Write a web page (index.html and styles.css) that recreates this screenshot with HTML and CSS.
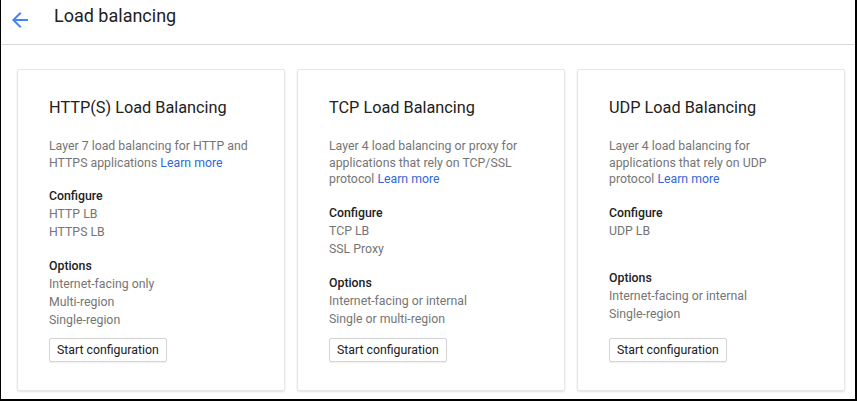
FILE: index.html
```html
<!DOCTYPE html>
<html lang="en">
<head>
<meta charset="utf-8">
<title>Load balancing</title>
<link rel="stylesheet" href="styles.css">
</head>
<body>
<div class="frame">
  <header class="header">
    <svg class="back" viewBox="0 0 24 24" width="24" height="24" aria-hidden="true">
      <path d="M20 11H7.83l5.59-5.59L12 4l-8 8 8 8 1.41-1.41L7.83 13H20v-2z"/>
    </svg>
    <h1 class="page-title">Load balancing</h1>
  </header>
  <main class="cards">
    <section class="card">
      <h2 class="card-title">HTTP(S) Load Balancing</h2>
      <p class="desc">Layer 7 load balancing for HTTP and HTTPS applications <a class="link" href="#">Learn more</a></p>
      <div class="group group-config">
        <div class="group-title">Configure</div>
        <div class="item">HTTP LB</div>
        <div class="item">HTTPS LB</div>
      </div>
      <div class="group group-options">
        <div class="group-title">Options</div>
        <div class="item">Internet-facing only</div>
        <div class="item">Multi-region</div>
        <div class="item">Single-region</div>
      </div>
      <button class="btn" type="button">Start configuration</button>
    </section>
    <section class="card">
      <h2 class="card-title">TCP Load Balancing</h2>
      <p class="desc">Layer 4 load balancing or proxy for applications that rely on TCP/SSL protocol <a class="link" href="#">Learn more</a></p>
      <div class="group group-config">
        <div class="group-title">Configure</div>
        <div class="item">TCP LB</div>
        <div class="item">SSL Proxy</div>
      </div>
      <div class="group group-options">
        <div class="group-title">Options</div>
        <div class="item">Internet-facing or internal</div>
        <div class="item">Single or multi-region</div>
      </div>
      <button class="btn" type="button">Start configuration</button>
    </section>
    <section class="card">
      <h2 class="card-title">UDP Load Balancing</h2>
      <p class="desc">Layer 4 load balancing for applications that rely on UDP protocol <a class="link" href="#">Learn more</a></p>
      <div class="group group-config">
        <div class="group-title">Configure</div>
        <div class="item">UDP LB</div>
      </div>
      <div class="group group-options">
        <div class="group-title">Options</div>
        <div class="item">Internet-facing or internal</div>
        <div class="item">Single-region</div>
      </div>
      <button class="btn" type="button">Start configuration</button>
    </section>
  </main>
</div>
</body>
</html>
```

FILE: styles.css
```css
* { box-sizing: border-box; }
html, body { margin: 0; padding: 0; background: #fff; }
body {
  font-family: Roboto, "Liberation Sans", Arial, sans-serif;
  color: #212121;
}
.frame {
  width: 857px;
  height: 401px;
  border-left: 1px solid #000;
  border-right: 2px solid #000;
  border-bottom: 2px solid #000;
  overflow: hidden;
}
.header {
  display: flex;
  align-items: flex-start;
  height: 45px;
  padding: 4px 0 0 7px;
  border-bottom: 1px solid #dadada;
}
.back {
  fill: #4285f4;
  margin-top: 4px;
  flex: none;
}
.page-title {
  margin: 0 0 0 22px;
  font-size: 18px;
  line-height: 24px;
  font-weight: 400;
  color: #212121;
}
.cards {
  display: grid;
  grid-template-columns: repeat(3, 268px);
  column-gap: 12px;
  padding: 24px 10px 0 16px;
}
.card {
  display: flex;
  flex-direction: column;
  border: 1px solid #e6e6e6;
  border-radius: 2px;
  box-shadow: 0 1px 2px rgba(0, 0, 0, 0.12);
  padding: 26px 32px 28px 31px;
}
.card-title {
  margin: 0 0 18px;
  font-size: 16.3px;
  line-height: 24px;
  font-weight: 400;
  color: #212121;
}
.desc {
  margin: 0 0 17px;
  font-size: 12.3px;
  line-height: 16.5px;
  color: #757575;
}
.link {
  color: #3367d6;
  text-decoration: none;
}
.group {
  font-size: 12.3px;
}
.group-config {
  min-height: 48px;
  margin-bottom: 17px;
}
.group-options {
  margin-bottom: 9px;
}
.group-title {
  line-height: 17px;
  font-weight: 500;
  color: #212121;
}
.item {
  line-height: 18px;
  color: #757575;
}
.btn {
  margin-top: auto;
  align-self: flex-start;
  height: 24px;
  padding: 0 7px;
  font-family: inherit;
  font-size: 12.3px;
  color: #212121;
  background: #fff;
  border: 1px solid #d4d4d4;
  border-radius: 2px;
  box-shadow: 0 1px 1px rgba(0, 0, 0, 0.06);
}
```
